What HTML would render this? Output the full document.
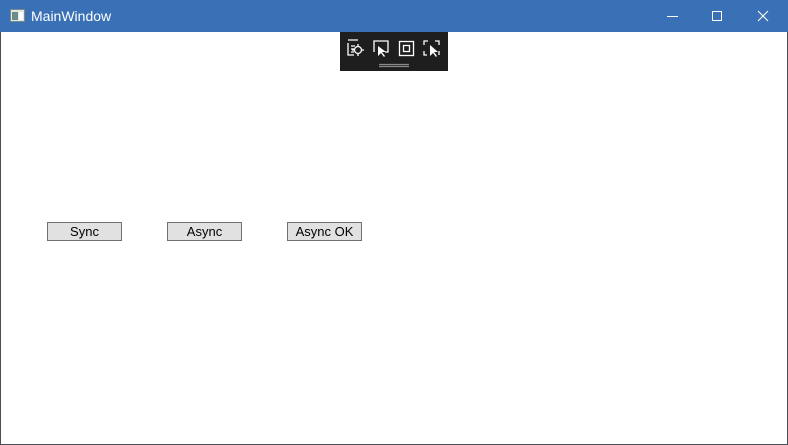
<!DOCTYPE html>
<html><head><style>
*{margin:0;padding:0;box-sizing:border-box}
body{width:788px;height:445px;overflow:hidden;background:#fff;font-family:"Liberation Sans",sans-serif;position:relative}
.win{position:absolute;left:0;top:0;width:788px;height:445px;border:1px solid #4a4f57;border-top:none;background:#fff}
.tb{position:absolute;left:0;top:0;width:788px;height:32px;background:#3a70b5;color:#fff}
.title{position:absolute;left:31px;top:8px;font-size:14px}
.btn{position:absolute;top:222px;width:75px;height:19px;background:#e1e1e1;border:1px solid #707070;font-size:13px;text-align:center;line-height:17px;color:#000}
.tool{position:absolute;left:340px;top:32px;width:108px;height:39px;background:#1e1e1e}
</style></head><body>
<div class="win"></div>
<div class="tb">
<svg style="position:absolute;left:10px;top:9px" width="15" height="13"><rect x="0.5" y="0.5" width="14" height="12" fill="#dfe8e4" stroke="#7a8a88"/><rect x="2" y="3" width="6" height="8" fill="#6c8c88"/><rect x="9" y="3" width="4" height="8" fill="#fff"/></svg>
<div class="title">MainWindow</div>
<svg style="position:absolute;left:660px;top:0" width="128" height="32" stroke="#fff" fill="none" stroke-width="1">
<line x1="7" y1="16.5" x2="18" y2="16.5"/>
<rect x="52.5" y="11.5" width="9" height="9"/>
<line x1="98" y1="11" x2="108" y2="21"/><line x1="108" y1="11" x2="98" y2="21"/>
</svg>
</div>
<div class="tool">
<svg width="108" height="39" stroke="#fff" fill="none" stroke-width="1.3">
<path d="M8 8h10M8 11v12h6M11 14h4M11 17h3M11 20h3"/><circle cx="18" cy="18" r="3.5"/><path d="M18 12v2.5M18 21.5v2.5M12 18h2.5M21.5 18h2.5"/>
<path d="M34 20v-11h14v11h-3"/><path d="M38 14l0 10 3-3 3 4 1-1-3-4 4 0z" fill="#fff" stroke="none"/>
<rect x="59.5" y="9.5" width="14" height="14"/><rect x="63.5" y="13.5" width="6" height="6"/>
<path d="M84 13v-4h4M95 9h4v4M84 19v4h3M99 19v4"/><path d="M90 13l0 11 3-3 3 4 1-1-3-4 4 0z" fill="#fff" stroke="none"/>
<line x1="39" y1="32.5" x2="69" y2="32.5" stroke="#888"/><line x1="39" y1="34.5" x2="69" y2="34.5" stroke="#888"/>
</svg>
</div>
<div class="btn" style="left:47px">Sync</div>
<div class="btn" style="left:167px">Async</div>
<div class="btn" style="left:287px">Async OK</div>
</body></html>
